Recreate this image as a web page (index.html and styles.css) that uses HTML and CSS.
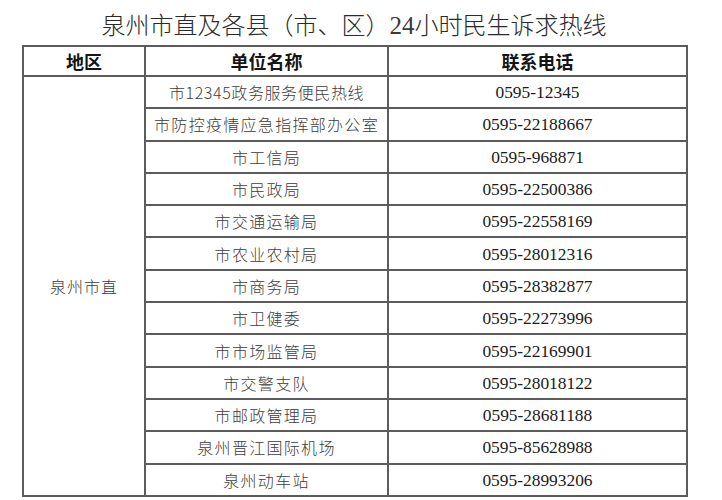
FILE: index.html
```html
<!DOCTYPE html>
<html lang="zh-CN">
<head>
<meta charset="utf-8">
<title>泉州市直及各县（市、区）24小时民生诉求热线</title>
<link rel="stylesheet" href="styles.css">
</head>
<body>
<div class="page">
  <h1 class="title">泉州市直及各县（市、区）<span class="num">24</span>小时民生诉求热线</h1>
  <table class="hotline">
    <colgroup>
      <col class="c-area">
      <col class="c-unit">
      <col class="c-tel">
    </colgroup>
    <thead>
      <tr class="head">
        <th>地区</th>
        <th>单位名称</th>
        <th>联系电话</th>
      </tr>
    </thead>
    <tbody>
      <tr><td class="area" rowspan="13">泉州市直</td><td class="unit unit-tight">市12345政务服务便民热线</td><td class="tel">0595-12345</td></tr>
      <tr><td class="unit">市防控疫情应急指挥部办公室</td><td class="tel">0595-22188667</td></tr>
      <tr><td class="unit">市工信局</td><td class="tel">0595-968871</td></tr>
      <tr><td class="unit">市民政局</td><td class="tel">0595-22500386</td></tr>
      <tr><td class="unit">市交通运输局</td><td class="tel">0595-22558169</td></tr>
      <tr><td class="unit">市农业农村局</td><td class="tel">0595-28012316</td></tr>
      <tr><td class="unit">市商务局</td><td class="tel">0595-28382877</td></tr>
      <tr><td class="unit">市卫健委</td><td class="tel">0595-22273996</td></tr>
      <tr><td class="unit">市市场监管局</td><td class="tel">0595-22169901</td></tr>
      <tr><td class="unit">市交警支队</td><td class="tel">0595-28018122</td></tr>
      <tr><td class="unit">市邮政管理局</td><td class="tel">0595-28681188</td></tr>
      <tr><td class="unit">泉州晋江国际机场</td><td class="tel">0595-85628988</td></tr>
      <tr><td class="unit">泉州动车站</td><td class="tel">0595-28993206</td></tr>
    </tbody>
  </table>
</div>
</body>
</html>
```
FILE: styles.css
```css
html, body {
  margin: 0;
  padding: 0;
  background: #ffffff;
}

.page {
  width: 722px;
  height: 500px;
  overflow: hidden;
  padding-left: 22px;
  box-sizing: border-box;
}

.title {
  margin: 0;
  width: 664px;
  height: 45px;
  padding-top: 3px;
  box-sizing: border-box;
  line-height: 42px;
  text-align: center;
  font-family: "Noto Sans CJK SC", sans-serif;
  font-weight: 300;
  font-size: 24px;
  color: #2a2a2a;
  white-space: nowrap;
}

.title .num {
  font-family: "Liberation Serif", serif;
  font-size: 25px;
  color: #3a3a3a;
}

.hotline {
  border-collapse: collapse;
  table-layout: fixed;
  width: 664px;
}

.c-area { width: 122px; }
.c-unit { width: 243px; }
.c-tel { width: 299px; }

.hotline th,
.hotline td {
  border: 2px solid #5c5c5c;
  padding: 0;
  text-align: center;
  vertical-align: middle;
  white-space: nowrap;
}

.head th {
  height: 28px;
  font-family: "Noto Sans CJK SC", sans-serif;
  font-weight: 700;
  font-size: 18px;
  color: #151515;
  line-height: 20px;
}

.hotline tbody tr {
  height: 32.3px;
}

.unit {
  font-family: "Noto Sans CJK SC", sans-serif;
  font-weight: 300;
  font-size: 16px;
  letter-spacing: 1.3px;
  color: #3c3c3c;
  line-height: 20px;
}

.unit-tight {
  letter-spacing: 0.6px;
}

.area {
  font-family: "Noto Sans CJK SC", sans-serif;
  font-weight: 300;
  font-size: 16px;
  letter-spacing: 1px;
  color: #3c3c3c;
}

.tel {
  font-family: "Liberation Serif", serif;
  font-size: 17.4px;
  color: #1a1a1a;
  line-height: 20px;
}
```
